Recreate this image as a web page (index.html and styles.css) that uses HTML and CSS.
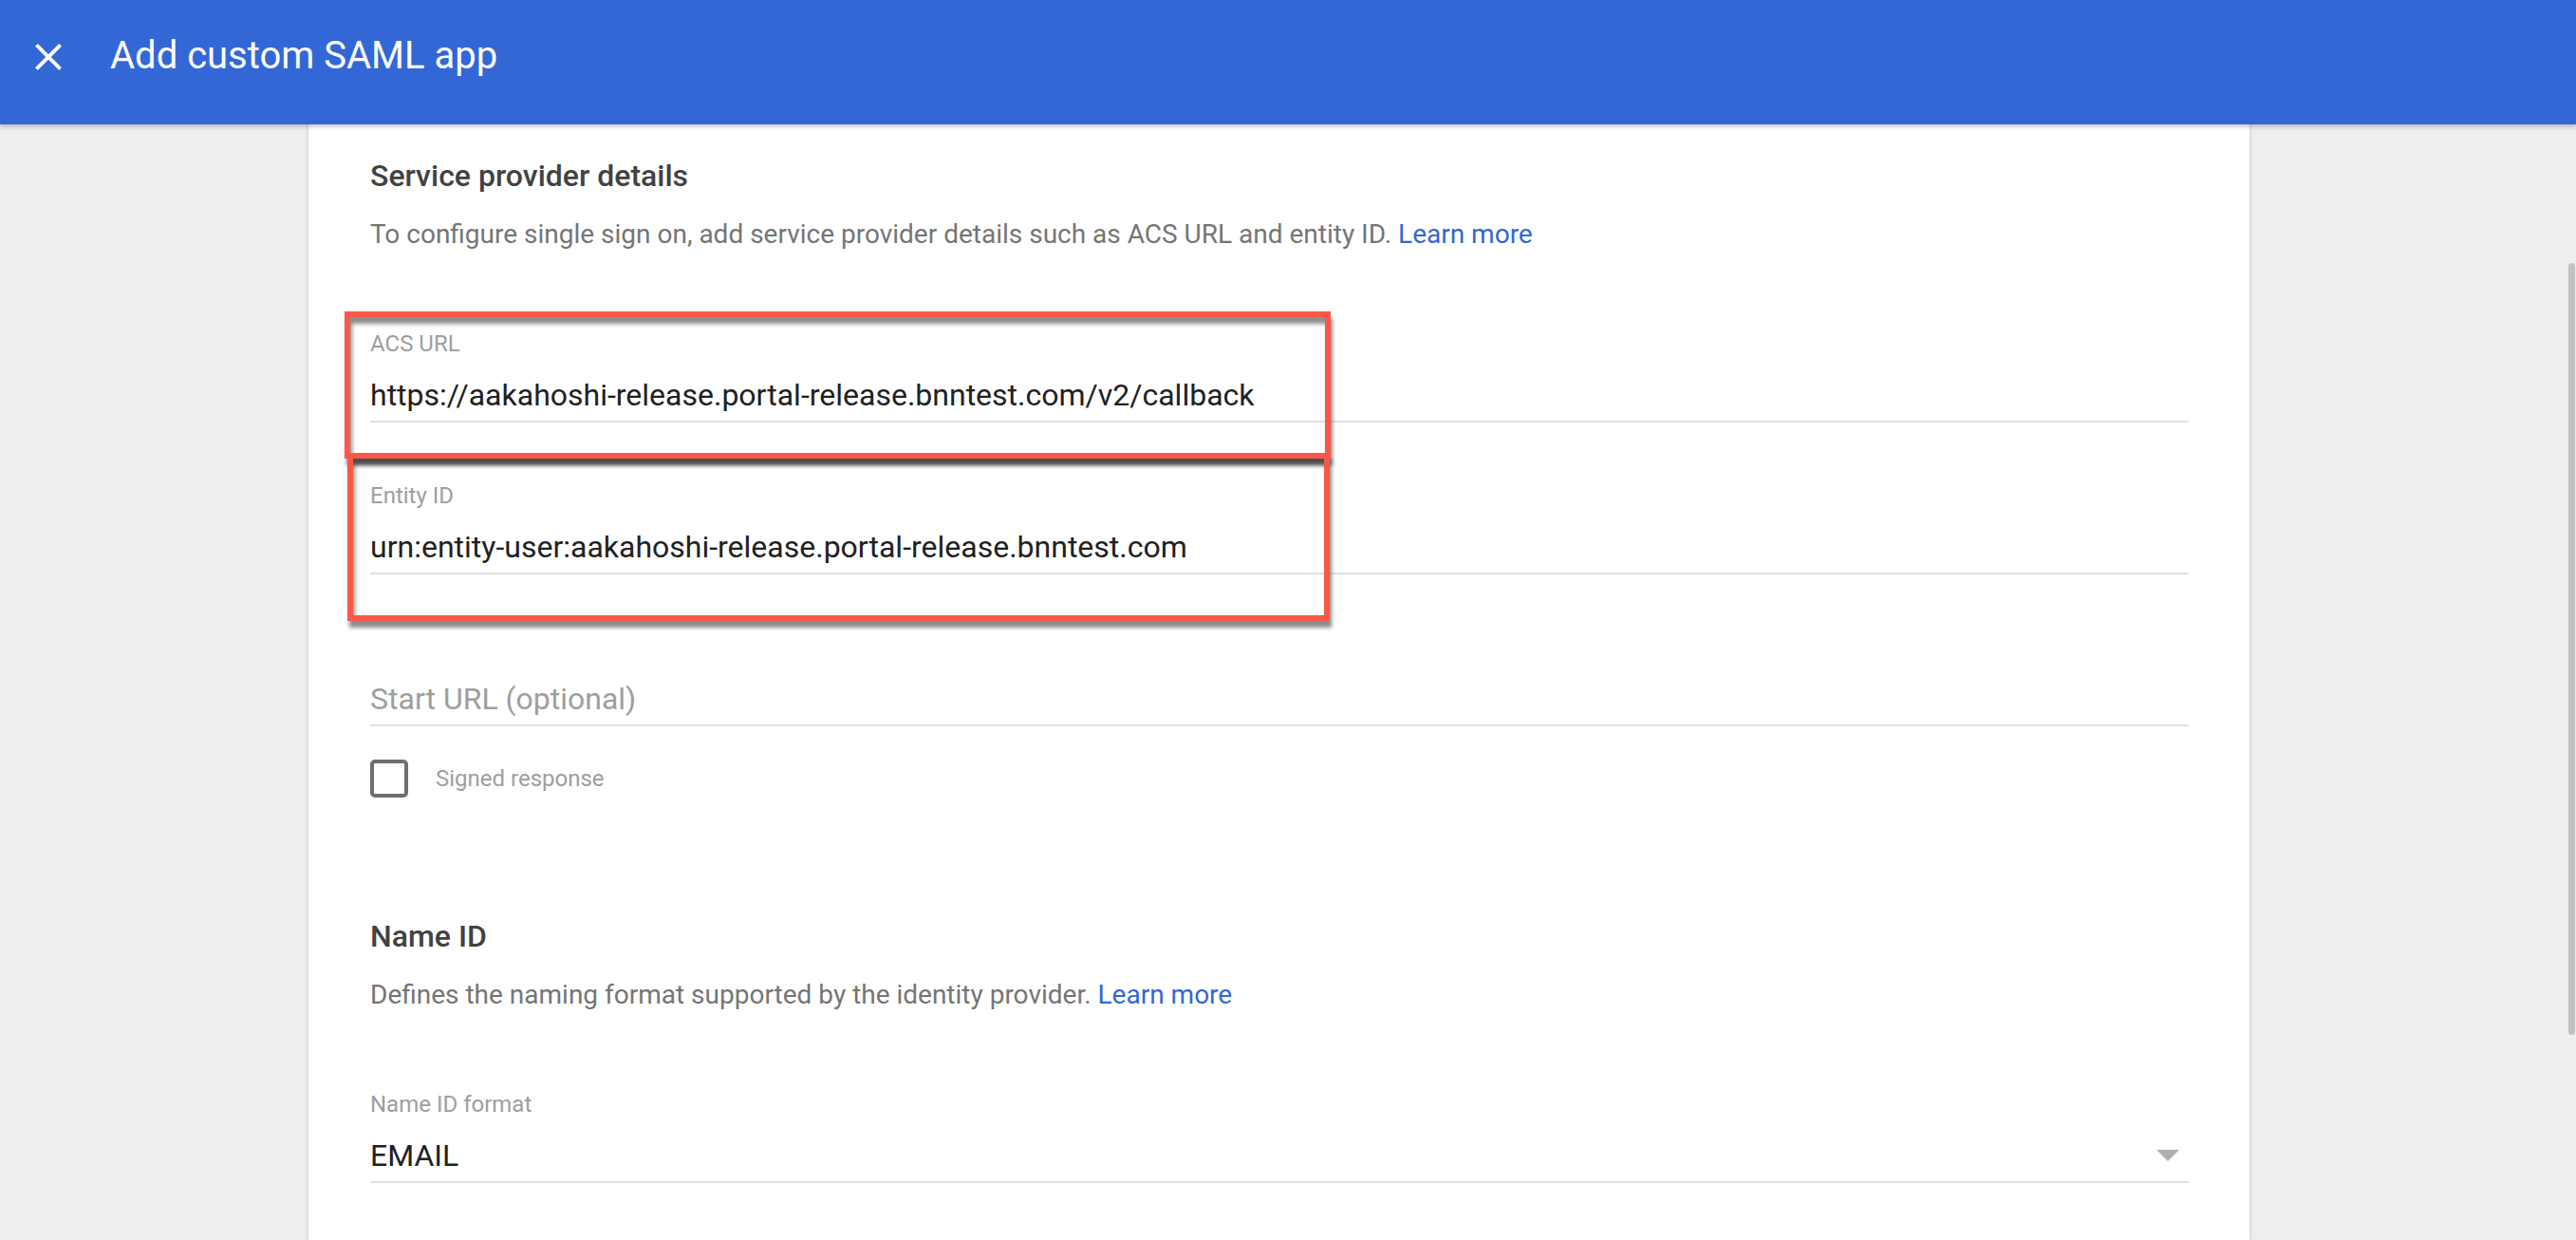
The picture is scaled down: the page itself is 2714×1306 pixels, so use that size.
FILE: index.html
```html
<!DOCTYPE html>
<html>
<head>
  <meta charset="utf-8">
  <title>Add custom SAML app</title>
  <link rel="stylesheet" href="styles.css">
</head>
<body>
<div class="appbar">
  <a class="close" title="Close"><svg viewBox="0 0 24 24" width="48" height="48"><path fill="#fff" d="M19 6.41L17.59 5 12 10.59 6.41 5 5 6.41 10.59 12 5 17.59 6.41 19 12 13.41 17.59 19 19 17.59 13.41 12z"/></svg></a>
  <span class="title">Add custom SAML app</span>
</div>
<div class="main">
  <div class="card">
    <div class="section">
      <div class="heading">Service provider details</div>
      <div class="desc">To configure single sign on, add service provider details such as ACS URL and entity ID. <a href="#">Learn more</a></div>
      <div class="field"><label>ACS URL</label><div class="value">https://aakahoshi-release.portal-release.bnntest.com/v2/callback</div></div>
      <div class="field"><label>Entity ID</label><div class="value">urn:entity-user:aakahoshi-release.portal-release.bnntest.com</div></div>
      <div class="field"><label></label><div class="value empty">Start URL (optional)</div></div>
      <div class="check"><span class="box"></span><span class="text">Signed response</span></div>
    </div>
    <div class="section second">
      <div class="heading">Name ID</div>
      <div class="desc">Defines the naming format supported by the identity provider. <a href="#">Learn more</a></div>
      <div class="field select"><label>Name ID format</label><div class="value"><span>EMAIL</span><span class="arrow"></span></div></div>
    </div>
    <div class="mark acs"></div>
    <div class="mark entity"></div>
  </div>
</div>
<div class="thumb"></div>
</body>
</html>
```

FILE: styles.css
```css
html, body { margin: 0; height: 100%; overflow: hidden; }
body { background-color: #eeeeee; font-family: Roboto, "Noto Sans", Arial, sans-serif; }
.appbar { position: relative; z-index: 2; height: 131px; box-sizing: border-box; display: flex; align-items: flex-start; padding: 36px 0 0 27px; background-color: #3367d6; box-shadow: 0 2px 5px rgba(0,0,0,.25); }
.appbar .close { display: block; width: 48px; height: 48px; margin-right: 41px; cursor: pointer; }
.appbar .close svg { display: block; }
.appbar .title { margin-top: -1px; color: #fff; font-size: 40px; line-height: 48px; font-weight: 400; }
.main { padding-left: 325px; height: calc(100% - 131px); }
.card { position: relative; width: 2045px; height: 100%; box-sizing: border-box; padding: 34px 64px 0 65px; background-color: #fff; box-shadow: 0 0 3px 1px rgba(0,0,0,.13); }
.section.second { margin-top: 126px; }
.heading { font-size: 32px; line-height: 40px; font-weight: 500; color: #424242; }
.desc { margin-top: 22px; margin-bottom: 18px; font-size: 28px; line-height: 40px; color: #757575; }
.desc a { color: #3367d6; text-decoration: none; }
.field { padding: 61px 0 7px; border-bottom: 2px solid #e0e0e0; }
.field label { display: block; height: 32px; font-size: 24px; line-height: 32px; color: #9e9e9e; }
.field .value { margin-top: 18px; font-size: 32px; line-height: 40px; color: #212121; white-space: nowrap; }
.field .value.empty { color: #9e9e9e; }
.field.select .value { display: flex; justify-content: space-between; align-items: center; }
.field.select .arrow { width: 0; height: 0; margin-right: 10px; border-left: 12px solid transparent; border-right: 12px solid transparent; border-top: 12px solid #b0b0b0; }
.check { display: flex; align-items: center; margin-top: 35px; height: 40px; }
.check .box { width: 40px; height: 40px; box-sizing: border-box; border: 4px solid #6f6f6f; border-radius: 5px; }
.check .text { margin-left: 29px; font-size: 24px; line-height: 40px; color: #9e9e9e; }
.mark { position: absolute; box-sizing: border-box; border: 6px solid #fb5748; box-shadow: 2px 7px 4px rgba(0,0,0,.45), inset 2px 7px 4px rgba(0,0,0,.45); }
.mark.acs { left: 38px; top: 197px; width: 1039px; height: 155px; }
.mark.entity { left: 41px; top: 346px; width: 1035px; height: 177px; }
.thumb { position: fixed; right: 1px; top: 277px; width: 7px; height: 813px; border-radius: 4px; background-color: #c2c2c2; }
```
